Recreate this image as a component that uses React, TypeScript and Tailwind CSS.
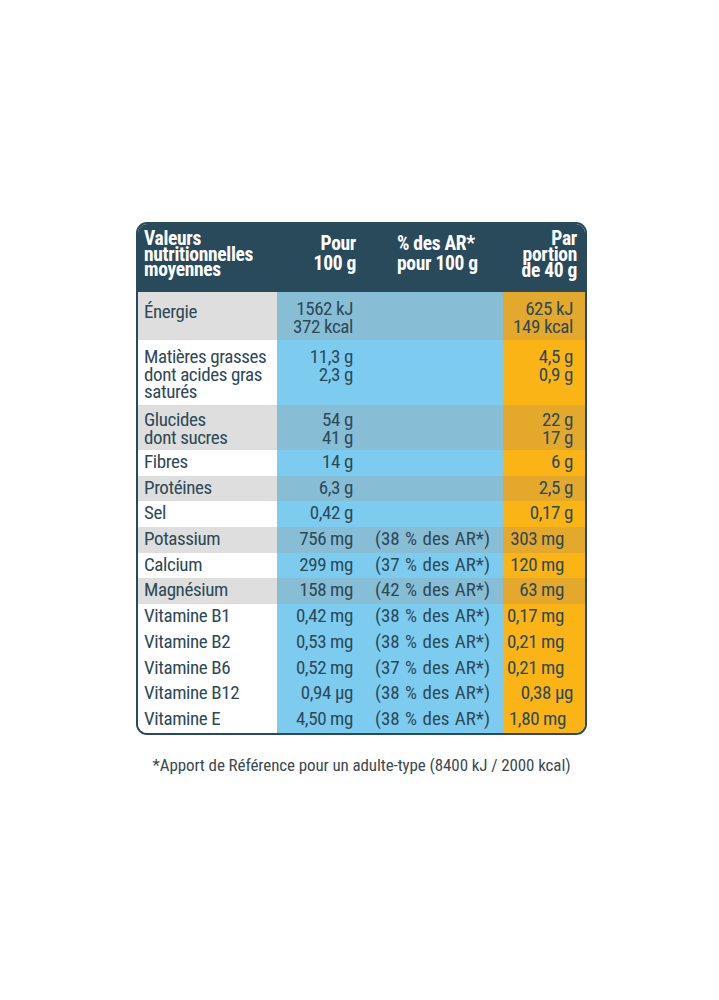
import React from "react";

type Row = {
  label: string[];
  pour: string[];
  ar?: string;
  par: string[];
  shaded: boolean;
  pad: string;
  labelPad?: string;
  parPad?: string;
};

const rows: Row[] = [
  { label: ["Énergie"], pour: ["1562 kJ", "372 kcal"], par: ["625 kJ", "149 kcal"], shaded: true, pad: "h-[48px] pt-[8px]", labelPad: "h-[48px] pt-[11px]" },
  { label: ["Matières grasses", "dont acides gras", "saturés"], pour: ["11,3 g", "2,3 g"], par: ["4,5 g", "0,9 g"], shaded: false, pad: "h-[65px] pt-[8px]" },
  { label: ["Glucides", "dont sucres"], pour: ["54 g", "41 g"], par: ["22 g", "17 g"], shaded: true, pad: "h-[45px] pt-[6px]" },
  { label: ["Fibres"], pour: ["14 g"], par: ["6 g"], shaded: false, pad: "h-[25.7px] pt-[3px]" },
  { label: ["Protéines"], pour: ["6,3 g"], par: ["2,5 g"], shaded: true, pad: "h-[25.7px] pt-[3px]" },
  { label: ["Sel"], pour: ["0,42 g"], par: ["0,17 g"], shaded: false, pad: "h-[25.7px] pt-[3px]" },
  { label: ["Potassium"], pour: ["756 mg"], ar: "(38 % des AR*)", par: ["303 mg"], shaded: true, pad: "h-[25.7px] pt-[3px]", parPad: "pr-[21px]" },
  { label: ["Calcium"], pour: ["299 mg"], ar: "(37 % des AR*)", par: ["120 mg"], shaded: false, pad: "h-[25.7px] pt-[3px]", parPad: "pr-[21px]" },
  { label: ["Magnésium"], pour: ["158 mg"], ar: "(42 % des AR*)", par: ["63 mg"], shaded: true, pad: "h-[25.7px] pt-[3px]", parPad: "pr-[21px]" },
  { label: ["Vitamine B1"], pour: ["0,42 mg"], ar: "(38 % des AR*)", par: ["0,17 mg"], shaded: false, pad: "h-[25.7px] pt-[3px]", parPad: "pr-[21px]" },
  { label: ["Vitamine B2"], pour: ["0,53 mg"], ar: "(38 % des AR*)", par: ["0,21 mg"], shaded: false, pad: "h-[25.7px] pt-[3px]", parPad: "pr-[21px]" },
  { label: ["Vitamine B6"], pour: ["0,52 mg"], ar: "(37 % des AR*)", par: ["0,21 mg"], shaded: false, pad: "h-[25.7px] pt-[3px]", parPad: "pr-[21px]" },
  { label: ["Vitamine B12"], pour: ["0,94 µg"], ar: "(38 % des AR*)", par: ["0,38 µg"], shaded: false, pad: "h-[25.7px] pt-[3px]", parPad: "pr-[12px]" },
  { label: ["Vitamine E"], pour: ["4,50 mg"], ar: "(38 % des AR*)", par: ["1,80 mg"], shaded: false, pad: "h-[25.7px] pt-[3px]", parPad: "pr-[19px]" },
];

function Lines({ items }: { items: string[] }) {
  return (
    <>
      {items.map((t, i) => (
        <div key={i} className="whitespace-nowrap">
          {t}
        </div>
      ))}
    </>
  );
}

export default function App() {
  return (
    <div className="min-h-[1000px] w-[719px] bg-white pt-[222px] pl-[136px] font-['Roboto_Condensed','Liberation_Sans_Narrow',Roboto,sans-serif] text-[#2d4956]">
      <div className="w-[451px] overflow-hidden rounded-[11px] border-2 border-[#284a5a]">
        {/* header */}
        <div className="grid h-[68px] grid-cols-[139px_86px_140px_82px] bg-[#284a5a] text-[19.5px] font-bold tracking-[-0.3px] text-white">
          <div className="pl-[6px] pt-[7px] leading-[15.5px]">
            <div>Valeurs</div>
            <div>nutritionnelles</div>
            <div>moyennes</div>
          </div>
          <div className="pr-[7px] pt-[10px] text-right leading-[20px]">
            <div>Pour</div>
            <div>100 g</div>
          </div>
          <div className="pl-[34px] pt-[10px] leading-[20px]">
            <div>% des AR*</div>
            <div>pour 100 g</div>
          </div>
          <div className="pr-[8px] pt-[7px] text-right leading-[16px]">
            <div>Par</div>
            <div>portion</div>
            <div>de 40 g</div>
          </div>
        </div>
        {/* body */}
        {rows.map((r, i) => (
          <div key={i} className="grid grid-cols-[139px_86px_140px_82px] text-[19px] leading-[17.5px] tracking-[-0.4px]">
            <div className={`${r.labelPad ?? r.pad} pl-[6px] ${r.shaded ? "bg-[#dedede]" : "bg-white"}`}>
              <Lines items={r.label} />
            </div>
            <div className={`${r.pad} pr-[10px] text-right ${r.shaded ? "bg-[#88bdd6]" : "bg-[#7dccf0]"}`}>
              <Lines items={r.pour} />
            </div>
            <div className={`${r.pad} pl-[12px] tracking-[0px] ${r.shaded ? "bg-[#88bdd6]" : "bg-[#7dccf0]"}`}>
              {r.ar ? <div className="whitespace-nowrap [word-spacing:1px]">{r.ar}</div> : null}
            </div>
            <div className={`${r.pad} ${r.parPad ?? "pr-[12px]"} text-right ${r.shaded ? "bg-[#e4a92c]" : "bg-[#fab416]"}`}>
              <Lines items={r.par} />
            </div>
          </div>
        ))}
      </div>
      <div className="w-[451px] pt-[19px] text-center text-[17px] leading-[22px] tracking-[-0.1px] text-[#3d4a52]">
        *Apport de Référence pour un adulte-type (8400 kJ / 2000 kcal)
      </div>
    </div>
  );
}
